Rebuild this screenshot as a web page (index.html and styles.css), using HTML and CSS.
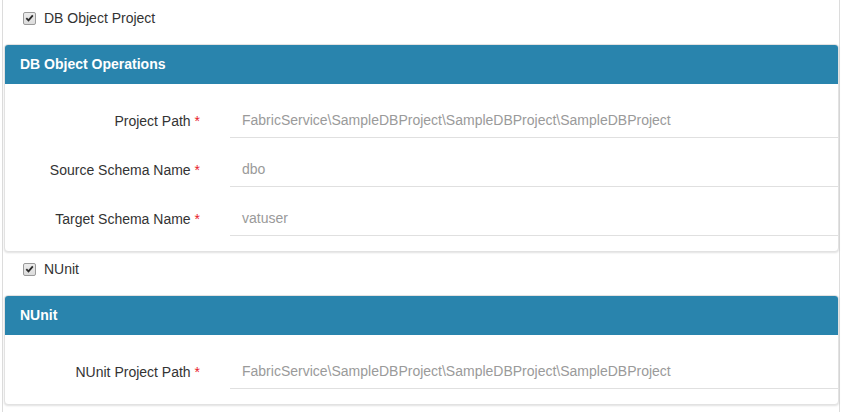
FILE: index.html
```html
<!DOCTYPE html>
<html>
<head>
<meta charset="utf-8">
<link rel="stylesheet" href="styles.css">
</head>
<body>
<div class="page">
  <div class="check-row">
    <span class="checkbox"><svg viewBox="0 0 12 12" width="12" height="12"><path d="M2.5 6.2 L4.9 8.6 L9.6 3.2" fill="none" stroke="#2b2b2b" stroke-width="2"/></svg></span>
    <span class="check-label">DB Object Project</span>
  </div>
  <section class="panel">
    <div class="panel-head">DB Object Operations</div>
    <div class="panel-body">
      <div class="form-row">
        <label class="field-label">Project Path <span class="req">*</span></label>
        <div class="field-input">FabricService\SampleDBProject\SampleDBProject\SampleDBProject</div>
      </div>
      <div class="form-row">
        <label class="field-label">Source Schema Name <span class="req">*</span></label>
        <div class="field-input">dbo</div>
      </div>
      <div class="form-row">
        <label class="field-label">Target Schema Name <span class="req">*</span></label>
        <div class="field-input">vatuser</div>
      </div>
    </div>
  </section>
  <div class="check-row">
    <span class="checkbox"><svg viewBox="0 0 12 12" width="12" height="12"><path d="M2.5 6.2 L4.9 8.6 L9.6 3.2" fill="none" stroke="#2b2b2b" stroke-width="2"/></svg></span>
    <span class="check-label">NUnit</span>
  </div>
  <section class="panel">
    <div class="panel-head">NUnit</div>
    <div class="panel-body">
      <div class="form-row">
        <label class="field-label">NUnit Project Path <span class="req">*</span></label>
        <div class="field-input">FabricService\SampleDBProject\SampleDBProject\SampleDBProject</div>
      </div>
    </div>
  </section>
</div>
</body>
</html>
```
FILE: styles.css
```css
* { box-sizing: border-box; }
html, body {
  margin: 0;
  padding: 0;
  background: #fff;
}
body {
  font-family: "Liberation Sans", Arial, sans-serif;
  font-size: 14px;
  color: #333;
}
.page {
  margin-left: 2px;
  width: 838px;
  min-height: 412px;
  border-left: 1px solid #dcdcdc;
  border-right: 1px solid #dcdcdc;
  padding-top: 1px;
}
.check-row {
  display: flex;
  align-items: center;
  height: 20px;
  margin: 7px 0 16px 20px;
}
.checkbox {
  width: 13px;
  height: 13px;
  border: 1px solid #9a9a9a;
  border-radius: 2px;
  background: linear-gradient(#ececec, #dcdcdc);
  display: flex;
  align-items: center;
  justify-content: center;
  margin-right: 8px;
}
.checkbox svg { display: block; }
.check-label { line-height: 20px; }
.panel {
  margin-left: 1px;
  width: 835px;
  border: 1px solid #e2e2e2;
  border-radius: 4px;
  box-shadow: 0 1px 2px rgba(0,0,0,0.12);
  background: #fff;
  overflow: hidden;
}
.panel-head {
  height: 40px;
  margin: -1px -1px 0;
  background: #2984ad;
  color: #fff;
  font-weight: bold;
  line-height: 40px;
  padding-left: 16px;
  border-radius: 4px 4px 0 0;
}
.panel-body {
  padding: 20px 0 0;
}
.form-row {
  display: grid;
  grid-template-columns: 195px 1fr;
  column-gap: 30px;
  margin-bottom: 15px;
}
.field-label {
  text-align: right;
  line-height: 34px;
  white-space: nowrap;
}
.req { color: #e8202a; }
.field-input {
  height: 34px;
  line-height: 33px;
  padding: 0 12px;
  color: #9a9a9a;
  border-bottom: 1px solid #e0e0e0;
  white-space: nowrap;
  overflow: hidden;
}
```
